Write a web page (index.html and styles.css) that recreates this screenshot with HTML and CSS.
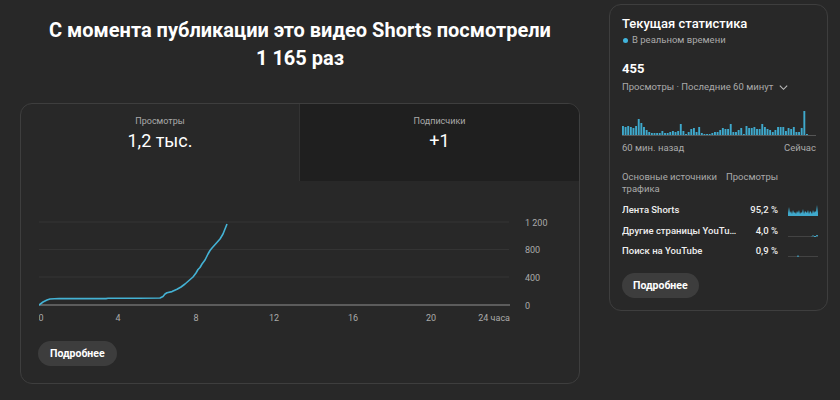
FILE: index.html
```html
<!DOCTYPE html>
<html lang="ru">
<head>
    <meta charset="UTF-8">
    <meta name="viewport" content="width=device-width, initial-scale=1.0">
    <title>Статистика Shorts</title>
    <link rel="stylesheet" href="styles.css">
</head>
<body>
    <div class="page">
        <div class="main">
            <h1 class="headline">С момента публикации это видео Shorts посмотрели<br>1 165 раз</h1>

            <div class="card">
                <div class="tabs">
                    <div class="tab">
                        <div class="tab-label">Просмотры</div>
                        <div class="tab-value">1,2 тыс.</div>
                    </div>
                    <div class="tab tab-dark">
                        <div class="tab-label">Подписчики</div>
                        <div class="tab-value">+1</div>
                    </div>
                </div>

                <svg class="chart" width="540" height="120" viewBox="0 0 540 120">
                    <!-- сетка -->
                    <line x1="0" y1="12" x2="470" y2="12" class="grid"/>
                    <line x1="0" y1="39.5" x2="470" y2="39.5" class="grid"/>
                    <line x1="0" y1="67" x2="470" y2="67" class="grid"/>
                    <line x1="0" y1="95" x2="471" y2="95" class="axis"/>

                    <polyline class="views-line" points="0,95 4,92 8,90 11,89 20,88.5 40,88.6 67,88.6 69,88.2 100,88.2 121,88 124,86.5 126,84 128,82.8 133,81.6 138,79.3 142,77 146,74 150,70.5 154,67 157,63 159,59.5 161,57.5 163,54 166,50 169,44 171,40.5 173,38 177,33.5 181,29 184,24 186,19 188,14"/>

                    <text x="486" y="15.5" class="y-label">1 200</text>
                    <text x="486" y="43" class="y-label">800</text>
                    <text x="486" y="70.5" class="y-label">400</text>
                    <text x="486" y="98.5" class="y-label">0</text>

                    <text x="2" y="110.5" class="x-label">0</text>
                    <text x="79" y="110.5" class="x-label">4</text>
                    <text x="157" y="110.5" class="x-label">8</text>
                    <text x="235" y="110.5" class="x-label">12</text>
                    <text x="314" y="110.5" class="x-label">16</text>
                    <text x="392" y="110.5" class="x-label">20</text>
                    <text x="471" y="110.5" class="x-label x-end">24 часа</text>
                </svg>

                <button class="more-btn">Подробнее</button>
            </div>
        </div>

        <div class="side">
            <div class="side-title">Текущая статистика</div>
            <div class="live"><span class="live-dot"></span>В реальном времени</div>

            <div class="live-count">455</div>
            <div class="live-period">Просмотры · Последние 60 минут
                <svg class="chevron" width="11" height="11" viewBox="0 0 12 12"><polyline points="2,4 6,8 10,4"/></svg>
            </div>

            <svg class="bars" id="bars" width="194" height="27" viewBox="0 0 194 27">
                <line x1="0" y1="25.5" x2="194" y2="25.5" class="bars-base"/>
            </svg>
            <div class="bars-labels">
                <span>60 мин. назад</span>
                <span>Сейчас</span>
            </div>

            <div class="sources-head">
                <span class="sources-name">Основные источники трафика</span>
                <span class="sources-views">Просмотры</span>
            </div>

            <div class="sources">
                <div class="source-row">
                    <span class="source-name">Лента Shorts</span>
                    <span class="source-value">95,2 %</span>
                    <svg class="spark" width="30" height="14" viewBox="0 0 30 14">
                        <line x1="0" y1="12.5" x2="30" y2="12.5" class="spark-base"/>
                        <polygon class="spark-fill" points="0,13 0,10 1,4 2,10 3,8 4,11 5,7 6,10 7,9 8,11 9,8 10,10 11,7 12,11 13,9 14,10 15,6 16,11 17,8 18,9 19,10 20,7 21,11 22,8 23,9 24,11 25,7 26,10 27,8 28,9 29,2 30,10 30,13"/>
                    </svg>
                </div>
                <div class="source-row">
                    <span class="source-name">Другие страницы YouTube</span>
                    <span class="source-value">4,0 %</span>
                    <svg class="spark" width="30" height="14" viewBox="0 0 30 14">
                        <line x1="0" y1="12.5" x2="30" y2="12.5" class="spark-base"/>
                        <polyline class="spark-line" points="24,12.5 25,11.5 26,12.5 28,12.5 29,11 30,12.5"/>
                    </svg>
                </div>
                <div class="source-row">
                    <span class="source-name">Поиск на YouTube</span>
                    <span class="source-value">0,9 %</span>
                    <svg class="spark" width="30" height="14" viewBox="0 0 30 14">
                        <line x1="0" y1="12.5" x2="30" y2="12.5" class="spark-base"/>
                        <polyline class="spark-line" points="9,12.5 10,11.8 11,12.5"/>
                    </svg>
                </div>
            </div>

            <button class="more-btn side-btn">Подробнее</button>
        </div>
    </div>

    <script>
        // просмотры по минутам за последний час (высота столбика в px)
        const minutes = [9,8,9,8,7,9,16,12,8,5,3,2,2,2,2,4,2,2,3,4,3,4,11,4,1,3,6,7,3,8,
                         2,1,1,1,2,3,3,5,7,6,6,11,3,3,5,7,1,9,7,7,8,6,6,11,8,6,5,3,5,8,
                         8,8,4,7,6,8,3,3,7,24,1];
        const bars = document.getElementById('bars');
        const step = 184 / (minutes.length - 1);
        minutes.forEach((h, i) => {
            const r = document.createElementNS('http://www.w3.org/2000/svg', 'rect');
            r.setAttribute('x', (i * step).toFixed(2));
            r.setAttribute('y', 25 - h);
            r.setAttribute('width', 1.9);
            r.setAttribute('height', h);
            r.setAttribute('class', 'bar');
            bars.appendChild(r);
        });
    </script>
</body>
</html>
```

FILE: styles.css
```css
body {
    margin: 0;
    background-color: #282828;
    color: #f1f1f1;
    font-family: Roboto, "Noto Sans", sans-serif;
}
.page {
    display: flex;
    align-items: flex-start;
    padding-left: 20px;
}
.main {
    width: 560px;
}
.headline {
    margin: 16px 0 31px;
    font-size: 20px;
    line-height: 28px;
    font-weight: 700;
    text-align: center;
    color: #fff;
}
.card {
    border: 1px solid #3e3e3e;
    border-radius: 12px;
    overflow: hidden;
    height: 281px;
    box-sizing: border-box;
}
.tabs {
    display: grid;
    grid-template-columns: 1fr 1fr;
    height: 77px;
}
.tab {
    text-align: center;
    padding-top: 11px;
    border-right: 1px solid #333;
}
.tab-dark {
    background-color: #1f1f1f;
    border-right: none;
}
.tab-label {
    font-size: 9px;
    line-height: 12px;
    color: #aaa;
}
.tab-value {
    font-size: 18px;
    line-height: 24px;
    margin-top: 2px;
    color: #fff;
}
.chart {
    display: block;
    margin: 29px 0 0 18px;
}
.grid {
    stroke: #343434;
    stroke-width: 1;
}
.axis {
    stroke: #5c5c5c;
    stroke-width: 2;
}
.views-line {
    fill: none;
    stroke: #44b2d4;
    stroke-width: 1.6;
    stroke-linejoin: round;
}
.y-label, .x-label {
    font-size: 9px;
    fill: #aaa;
    font-family: Roboto, "Noto Sans", sans-serif;
}
.x-label {
    text-anchor: middle;
}
.x-end {
    text-anchor: end;
}
.more-btn {
    display: block;
    margin: 11px 0 0 17px;
    height: 25px;
    padding: 0 12px;
    border: none;
    border-radius: 13px;
    background-color: #3d3d3d;
    color: #fff;
    font-family: Roboto, "Noto Sans", sans-serif;
    font-size: 10.5px;
    font-weight: 700;
}

/* правая колонка */
.side {
    width: 219px;
    margin: 4px 0 0 29px;
    padding: 9px 12px 12px;
    border: 1px solid #3e3e3e;
    border-radius: 12px;
    box-sizing: border-box;
}
.side-title {
    font-size: 13px;
    line-height: 20px;
    font-weight: 500;
    color: #fff;
}
.live {
    display: flex;
    align-items: center;
    font-size: 9.5px;
    line-height: 12px;
    color: #aaa;
}
.live-dot {
    width: 5px;
    height: 5px;
    border-radius: 50%;
    background-color: #41b4dc;
    margin: 0 4px 0 1px;
}
.live-count {
    margin-top: 14px;
    font-size: 13px;
    line-height: 18px;
    font-weight: 700;
    color: #fff;
}
.live-period {
    display: flex;
    align-items: center;
    font-size: 9.5px;
    line-height: 14px;
    color: #aaa;
    margin-top: 2px;
}
.chevron {
    margin-left: 5px;
    fill: none;
    stroke: #bbb;
    stroke-width: 1.2;
}
.bars {
    display: block;
    margin-top: 16px;
}
.bar {
    fill: #3fa9cc;
}
.bars-base {
    stroke: #555;
    stroke-width: 1;
}
.bars-labels {
    display: flex;
    justify-content: space-between;
    font-size: 9.5px;
    line-height: 12px;
    color: #aaa;
    margin-top: 5px;
    width: 194px;
}
.sources-head {
    display: flex;
    margin-top: 17px;
    font-size: 9.5px;
    line-height: 12px;
    color: #aaa;
}
.sources-name {
    width: 104px;
}
.sources {
    margin-top: 5px;
}
.source-row {
    display: grid;
    grid-template-columns: 1fr 34px 30px;
    column-gap: 7px;
    align-items: center;
    font-size: 9.5px;
    line-height: 12px;
    font-weight: 500;
    color: #eee;
    height: 20.4px;
}
.source-name {
    white-space: nowrap;
    overflow: hidden;
    text-overflow: ellipsis;
}
.source-value {
    text-align: right;
}
.spark {
    margin-left: 3px;
}
.spark-base {
    stroke: #4a4a4a;
    stroke-width: 0.8;
}
.spark-line {
    fill: none;
    stroke: #3fa9cc;
    stroke-width: 1;
}
.spark-fill {
    fill: #3fa9cc;
}
.side-btn {
    margin: 12px 0 0 0;
    padding: 0 11px;
}
```
